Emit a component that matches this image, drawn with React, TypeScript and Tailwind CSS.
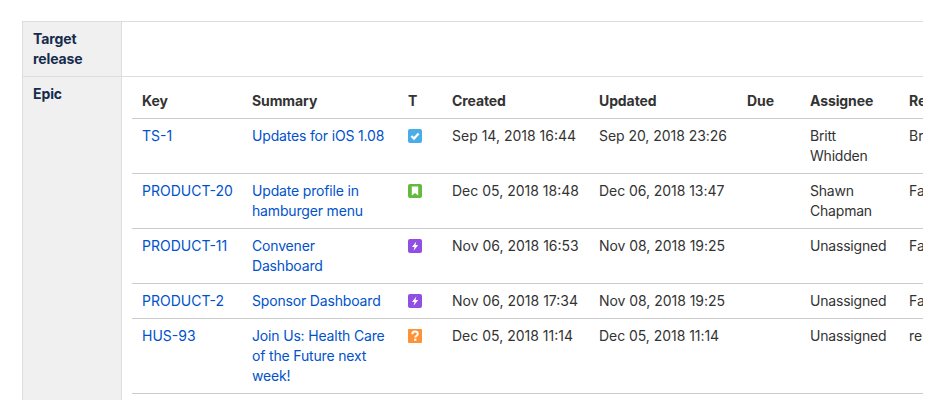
import React from "react";

type IconKind = "task" | "story" | "epic" | "question";

function TypeIcon({ kind }: { kind: IconKind }) {
  const fill = { task: "#4bade8", story: "#63ba3c", epic: "#904ee2", question: "#ff9136" }[kind];
  return (
    <svg width="14" height="14" viewBox="0 0 14 14" className="block">
      <rect width="14" height="14" rx={kind === "question" ? 1 : 2} fill={fill} />
      {kind === "task" && (
        <path d="M3.4 7 L6 9.6 L10.6 4.4" fill="none" stroke="#fff" strokeWidth="2.2" />
      )}
      {kind === "story" && <path d="M3.8 2.5 H10.2 V11.6 L7 9.1 L3.8 11.6 Z" fill="#fff" />}
      {kind === "epic" && <path d="M8.3 2.4 L4 7.9 H6.5 L5.6 11.8 L10.2 6 H7.5 Z" fill="#fff" />}
      {kind === "question" && (
        <>
          <path
            d="M4.3 5.2 C4.3 3.5 5.6 2.6 7 2.6 C8.6 2.6 9.8 3.5 9.8 5 C9.8 6.7 7.3 6.8 7.3 8.6"
            fill="none"
            stroke="#fff"
            strokeWidth="2"
          />
          <rect x="6.2" y="9.6" width="2.2" height="2.2" fill="#fff" />
        </>
      )}
    </svg>
  );
}

const rows: {
  key: string;
  summary: string;
  kind: IconKind;
  created: string;
  updated: string;
  assignee: string;
  reporter: string;
}[] = [
  { key: "TS-1", summary: "Updates for iOS 1.08", kind: "task", created: "Sep 14, 2018 16:44", updated: "Sep 20, 2018 23:26", assignee: "Britt Whidden", reporter: "Britt" },
  { key: "PRODUCT-20", summary: "Update profile in hamburger menu", kind: "story", created: "Dec 05, 2018 18:48", updated: "Dec 06, 2018 13:47", assignee: "Shawn Chapman", reporter: "Fabian" },
  { key: "PRODUCT-11", summary: "Convener Dashboard", kind: "epic", created: "Nov 06, 2018 16:53", updated: "Nov 08, 2018 19:25", assignee: "Unassigned", reporter: "Fabian" },
  { key: "PRODUCT-2", summary: "Sponsor Dashboard", kind: "epic", created: "Nov 06, 2018 17:34", updated: "Nov 08, 2018 19:25", assignee: "Unassigned", reporter: "Fabian" },
  { key: "HUS-93", summary: "Join Us: Health Care of the Future next week!", kind: "question", created: "Dec 05, 2018 11:14", updated: "Dec 05, 2018 11:14", assignee: "Unassigned", reporter: "reports" },
];

const headers = ["Key", "Summary", "T", "Created", "Updated", "Due", "Assignee", "Reporter"];

export default function App() {
  return (
    <div className="h-[400px] w-[941px] overflow-hidden bg-white pl-[22px] pt-[21px] font-['Inter','Liberation_Sans',sans-serif] text-[14px] leading-[20px] text-[#333333]">
      <div className="w-[901px] overflow-hidden">
        <div className="flex w-[901px] border-t border-[#dddddd]">
          <div className="w-[100px] shrink-0 border-x border-[#dddddd] bg-[#f0f0f0] px-[10px] py-[7px] font-bold tracking-[-0.1px] text-[#172b4d]">
            Target release
          </div>
          <div className="h-[54px] grow" />
        </div>
        <div className="flex w-[901px] border-t border-[#dddddd]">
          <div className="h-[400px] w-[100px] shrink-0 border-x border-[#dddddd] bg-[#f0f0f0] px-[10px] py-[7px] font-bold tracking-[-0.1px] text-[#172b4d]">
            Epic
          </div>
          <div className="min-w-0 grow pl-[10px] pt-[7px]">
            <table className="w-[840px] table-fixed border-collapse">
              <colgroup>
                <col className="w-[110px]" />
                <col className="w-[156px]" />
                <col className="w-[44px]" />
                <col className="w-[147px]" />
                <col className="w-[148px]" />
                <col className="w-[63px]" />
                <col className="w-[99px]" />
                <col className="w-[73px]" />
              </colgroup>
              <thead>
                <tr className="border-b border-[#cccccc]">
                  {headers.map((h) => (
                    <th key={h} className="whitespace-nowrap px-[10px] py-[7px] text-left font-bold tracking-[-0.1px]">
                      {h}
                    </th>
                  ))}
                </tr>
              </thead>
              <tbody>
                {rows.map((r) => (
                  <tr key={r.key} className="border-b border-[#cccccc] align-top">
                    <td className="whitespace-nowrap px-[10px] py-[7px] text-[#0052cc]">{r.key}</td>
                    <td className="px-[10px] py-[7px] tracking-[-0.17px] text-[#0052cc]">{r.summary}</td>
                    <td className="px-[10px] pb-[7px] pt-[10px]">
                      <TypeIcon kind={r.kind} />
                    </td>
                    <td className="whitespace-nowrap px-[10px] py-[7px]">{r.created}</td>
                    <td className="whitespace-nowrap px-[10px] py-[7px] tracking-[-0.05px]">{r.updated}</td>
                    <td className="px-[10px] py-[7px]" />
                    <td className="px-[10px] py-[7px] tracking-[-0.2px]">{r.assignee}</td>
                    <td className="whitespace-nowrap px-[10px] py-[7px]">{r.reporter}</td>
                  </tr>
                ))}
              </tbody>
            </table>
          </div>
        </div>
      </div>
    </div>
  );
}
